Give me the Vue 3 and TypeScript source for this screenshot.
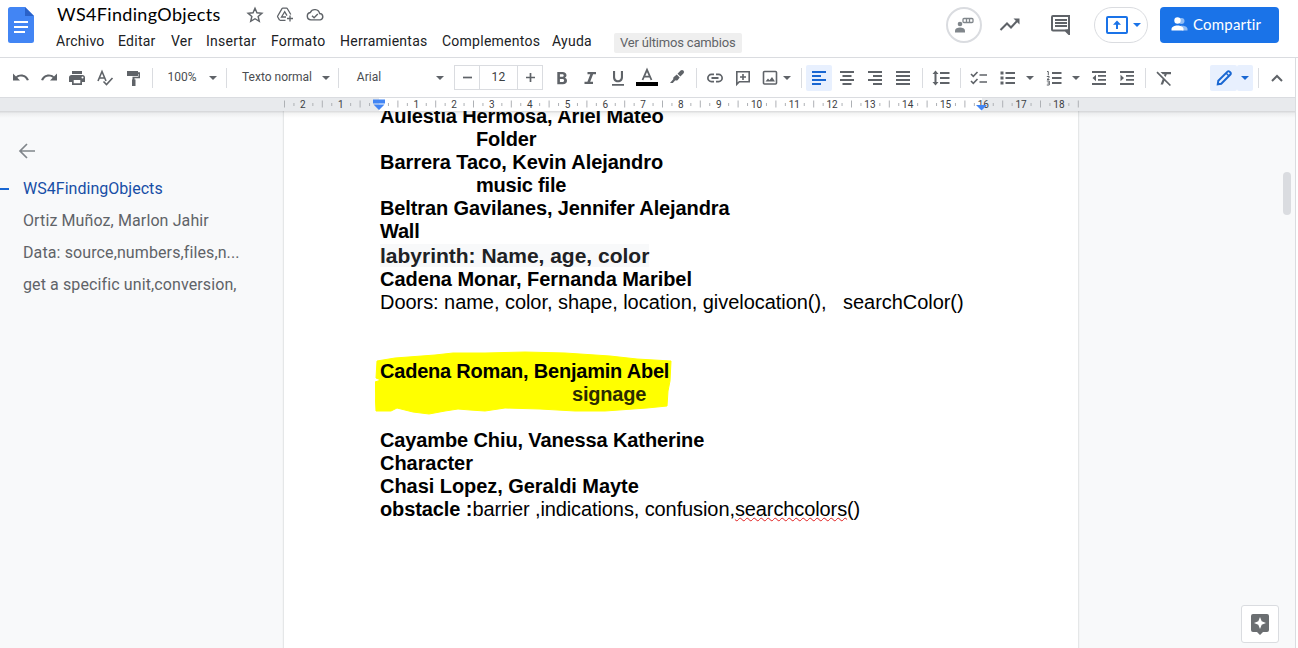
<script setup lang="ts">
interface Tool {
  kind: 'icon' | 'caret' | 'sep' | 'gap' | 'label' | 'size'
  w: number
  icon?: string
  text?: string
  tone?: string
}

const icon = (name: string, w = 28, tone = ''): Tool => ({ kind: 'icon', w, icon: name, tone })
const caret = (w: number, tone = ''): Tool => ({ kind: 'caret', w, tone })
const sep = (w: number): Tool => ({ kind: 'sep', w })
const gap = (w: number): Tool => ({ kind: 'gap', w })
const label = (text: string, w: number): Tool => ({ kind: 'label', w, text })

const tools: Tool[] = [
  icon('undo'), icon('redo'), icon('print'), icon('spell'), icon('paint'), sep(11),
  label('100%', 48), caret(14), sep(12),
  label('Texto normal', 90), caret(8), sep(17),
  label('Arial', 44), gap(42), caret(14), gap(7),
  { kind: 'size', w: 89 }, gap(5),
  icon('bold'), icon('italic', 28), icon('underline'), icon('color', 30), icon('marker', 30), sep(9),
  icon('link'), icon('addComment'), icon('image', 26), caret(8), gap(5), sep(10),
  icon('alignLeft', 26, 'active'), gap(1), icon('alignCenter'), icon('alignRight'), icon('justify'), sep(10),
  icon('spacing', 28), sep(10),
  icon('checklist'), icon('bullets', 30), caret(14), icon('numbers', 34), caret(10), gap(4),
  icon('outdent'), icon('indent'), sep(8),
  icon('clear', 30), gap(31),
  icon('pencil', 27, 'active'), caret(16, 'active'), sep(11),
  icon('chevron', 26),
]

// Glyphs on an 18 x 18 grid
const fills: Record<string, string> = {
  undo: 'M1 4.500v7h7L5.300 8.800c1-.8 2.300-1.300 3.800-1.300 2.700 0 4.900 1.600 5.800 4.100l2-.7C15.700 7.600 12.700 5.500 9.100 5.500c-2 0-3.700.7-5.100 1.900z',
  redo: 'M17 4.500v7h-7l2.700-2.700c-1-.8-2.300-1.300-3.800-1.300-2.700 0-4.900 1.600-5.800 4.100l-2-.7C2.300 7.600 5.300 5.500 8.900 5.500c2 0 3.700.7 5.100 1.900z',
  print: 'M4 2h10v3H4zM14.500 6h-11C2 6 1 7 1 8.500V13h3v3h10v-3h3V8.500C17 7 16 6 14.500 6zM12.300 14.300H5.700V11h6.600zM14.500 9.500a1 1 0 1 1 0-2 1 1 0 0 1 0 2z',
  paint: 'M3 2h11v1.200h2V9.200h-5.500v1.300h1V17H8v-6.500h.5V7.700h6V5H14v2H3z',
  bold: 'M4.300 3h5.200c2.500 0 4 1.300 4 3.300 0 1.200-.7 2.100-1.600 2.500 1.300.4 2.100 1.500 2.100 2.900 0 2.200-1.600 3.600-4.200 3.600H4.300zM6.900 5.200v2.600h2.300c.9 0 1.500-.5 1.500-1.300s-.6-1.300-1.500-1.300zM6.900 10v3h2.600c1 0 1.600-.6 1.600-1.500S10.500 10 9.500 10z',
  italic: 'M6.500 3H15v2.200h-2.900L9.200 12.800H12V15H3.500v-2.200h2.900l2.900-7.600H6.500z',
  underline: 'M4 2h2.100v6c0 2 1.100 3.200 2.900 3.200s2.900-1.200 2.900-3.200V2H14v6.200c0 3-2 5-5 5s-5-2-5-5zM3 15h12v1.700H3z',
  marker: 'M12.600 1.600a2 2 0 0 1 2.800 0 2 2 0 0 1 0 2.900l-3 3.100-2.900-2.900zM8.800 5.500l2.900 2.900-1.900 2.500c-.7.800-1.700.9-2.500.4L4.800 14H2l3.400-3.900c-.4-.8-.2-1.600.4-2.200z',
  link: 'M2.700 9c0-1.500 1.200-2.700 2.700-2.700H8V4.600H5.400a4.400 4.400 0 0 0 0 8.800H8v-1.700H5.400C3.900 11.700 2.700 10.500 2.700 9zM5.500 8.100h7v1.800h-7zM12.600 4.600H10v1.700h2.600a2.700 2.700 0 0 1 0 5.400H10v1.700h2.600a4.400 4.400 0 0 0 0-8.800z',
  alignLeft: 'M2 2h14v2H2zM2 6h9v2H2zM2 10h14v2H2zM2 14h9v2H2z',
  alignCenter: 'M2 2h14v2H2zM4.500 6h9v2h-9zM2 10h14v2H2zM4.500 14h9v2h-9z',
  alignRight: 'M2 2h14v2H2zM7 6h9v2H7zM2 10h14v2H2zM7 14h9v2H7z',
  justify: 'M2 2h14v2H2zM2 6h14v2H2zM2 10h14v2H2zM2 14h14v2H2z',
  spacing: 'M8 3h9.500v2H8zM8 8h9.500v2H8zM8 13h9.500v2H8zM3.500 1.500 6.500 5h-2v8h2l-3 3.500-3-3.500h2V5h-2z',
  bullets: 'M1.500 2.500h3v3h-3zM1.500 7.500h3v3h-3zM1.500 12.500h3v3h-3zM6.500 3H16v2H6.500zM6.500 8H16v2H6.500zM6.500 13H16v2H6.500z',
  outdent: 'M2 2h14v2H2zM8 6h8v1.800H8zM8 10h8v1.800H8zM2 14h14v2H2zM6 5.800v6.400L2.500 9z',
  indent: 'M2 2h14v2H2zM8 6h8v1.800H8zM8 10h8v1.800H8zM2 14h14v2H2zM2.500 5.800v6.400L6 9z',
  clear: 'M5.500 3H16v2.200h-4.200L10.600 8 9 6.400l.5-1.200H7.800zM2.600 2.500 16 15.900l-1.200 1.200-5.400-5.400L8 15.500H5.600l2.100-5.400L1.400 3.700z',
}

const menus = [
  { text: 'Archivo', w: 62 }, { text: 'Editar', w: 53 }, { text: 'Ver', w: 35 },
  { text: 'Insertar', w: 65 }, { text: 'Formato', w: 69 }, { text: 'Herramientas', w: 102 },
  { text: 'Complementos', w: 110 }, { text: 'Ayuda', w: 62 },
]

const outline = ['Ortiz Muñoz, Marlon Jahir', 'Data: source,numbers,files,n...', 'get a specific unit,conversion,']

// Horizontal ruler, one cell per centimetre
const CM = 37.8
const ORIGIN = 379
const cells = Array.from({ length: 21 }, (_, i) => i - 2)
const at = (n: number) => ORIGIN + n * CM
</script>

<template>
  <div class="app">
    <header class="header">
      <svg class="logo" width="26" height="36" viewBox="0 0 26 36">
        <path d="M2.500 0H17l9 9v24.500a2.500 2.500 0 0 1-2.500 2.500h-21A2.500 2.500 0 0 1 0 33.500v-31A2.500 2.500 0 0 1 2.500 0z" fill="#4285f4" />
        <path d="M17 0l9 9h-9z" fill="#2a62c9" />
        <path d="M6 14h14v2H6zM6 19h14v2H6zM6 24h11v2H6z" fill="#fff" />
      </svg>
      <div class="heading">
        <div class="title-row">
          <span class="title">WS4FindingObjects</span>
          <svg class="t-icon" width="18" height="18" viewBox="0 0 24 24">
            <path d="M12 3l2.600 6.100 6.600.6-5 4.300 1.500 6.500-5.700-3.500-5.700 3.500L7.800 14l-5-4.300 6.600-.6z" fill="none" stroke="#5f6368" stroke-width="1.900" />
          </svg>
          <svg class="t-icon" width="18" height="18" viewBox="0 0 18 18">
            <g fill="none" stroke="#5f6368" stroke-width="1.300">
              <path d="M9.500 14.300H4.300a1 1 0 0 1-.9-.5L1.700 11a1 1 0 0 1 0-1L6 2.700a1 1 0 0 1 .9-.5h3.600a1 1 0 0 1 .9.500L14.800 8.500" />
              <path d="M10 11H5.500L8.700 5.700 11 9.600" />
              <path d="M11 12.500h6M14 9.500v6" />
            </g>
          </svg>
          <svg class="t-icon" width="18" height="18" viewBox="0 0 24 24">
            <path d="M19 18.500H6.500a5 5 0 0 1-.7-9.900A6.600 6.600 0 0 1 18.200 10 4.300 4.300 0 0 1 19 18.500z" fill="none" stroke="#5f6368" stroke-width="1.900" />
            <path d="M8 13l2.800 2.700 4.900-4.900" fill="none" stroke="#5f6368" stroke-width="1.800" />
          </svg>
        </div>
        <nav class="menus">
          <span v-for="m in menus" :key="m.text" :style="{ width: m.w + 'px' }">{{ m.text }}</span>
          <span class="changes">Ver últimos cambios</span>
        </nav>
      </div>
      <div class="actions">
        <span class="round">
          <svg width="20" height="16" viewBox="0 0 20 16">
            <circle cx="6" cy="7" r="2.300" fill="#80868b" />
            <path d="M1 15.500v-2c0-2 2.500-3 5-3s5 1 5 3v2z" fill="#80868b" />
            <path d="M10 1.500h8a1 1 0 0 1 1 1v2a1 1 0 0 1-1 1h-8a1 1 0 0 1-1-1v-2a1 1 0 0 1 1-1zM12.500 1.500v4M15.500 1.500v4" fill="none" stroke="#80868b" stroke-width="1.300" />
          </svg>
        </span>
        <svg class="trend" width="22" height="16" viewBox="0 0 22 16">
          <path d="M1.500 13 8 6.500l4 4 7-7.500" fill="none" stroke="#5f6368" stroke-width="2" />
          <path d="M14.500 1.500H20.500V7.500z" fill="#5f6368" />
        </svg>
        <svg class="comments" width="20" height="20" viewBox="0 0 20 20">
          <path d="M2 1h16v18l-3.500-3.500H2a1 1 0 0 1-1-1V2a1 1 0 0 1 1-1z" fill="none" stroke="#5f6368" stroke-width="2" />
          <path d="M18.500 14.500V19L14.500 15z" fill="#5f6368" stroke="#5f6368" />
          <path d="M4 5h12M4 8h12M4 11h12" stroke="#5f6368" stroke-width="2" />
        </svg>
        <span class="present">
          <svg width="22" height="18" viewBox="0 0 22 18">
            <rect x="1" y="1" width="20" height="16" rx="1" fill="none" stroke="#1a73e8" stroke-width="2" />
            <path d="M11 4.500l4 4.200h-3V13h-2V8.700H7z" fill="#1a73e8" />
          </svg>
          <svg width="8" height="4" viewBox="0 0 8 4"><path d="M0 0h8L4 4z" fill="#1a73e8" /></svg>
        </span>
        <button class="share">
          <svg width="17" height="14" viewBox="0 0 17 14">
            <g fill="#8fbcf5"><circle cx="10.500" cy="4" r="3" /><path d="M10 8.500c4 .2 6.500 1.600 6.500 3.500v1.500H11z" /></g>
            <g fill="#fff"><circle cx="6.500" cy="3.500" r="3.200" /><path d="M.5 13.500V12c0-2.400 3-3.600 6-3.600s6 1.200 6 3.600v1.500z" /></g>
          </svg>
          <span>Compartir</span>
        </button>
      </div>
    </header>

    <div class="frame">
      <div class="toolbar">
        <div v-for="(t, i) in tools" :key="i" class="tool" :class="[t.kind, t.tone]" :style="{ width: t.w + 'px' }">
          <span v-if="t.kind === 'label'">{{ t.text }}</span>
          <i v-else-if="t.kind === 'sep'" />
          <svg v-else-if="t.kind === 'caret'" width="8" height="4" viewBox="0 0 8 4"><path d="M0 0h8L4 4z" fill="currentColor" /></svg>
          <template v-else-if="t.kind === 'size'">
            <span class="step"><svg width="9" height="9"><path d="M0 4.500h9" stroke="currentColor" stroke-width="1.700" /></svg></span>
            <span class="num">12</span>
            <span class="step"><svg width="9" height="9"><path d="M0 4.500h9M4.500 0v9" stroke="currentColor" stroke-width="1.700" /></svg></span>
          </template>
          <svg v-else-if="t.kind === 'icon'" width="18" height="18" viewBox="0 0 18 18" overflow="visible">
            <path v-if="fills[t.icon!]" :d="fills[t.icon!]" fill="currentColor" fill-rule="evenodd" />
            <g v-else fill="none" stroke="currentColor" stroke-width="1.600">
              <template v-if="t.icon === 'spell'">
                <path d="M2 12 6 2.500 10 12M3.300 9h5.400" /><path d="M7.500 12.500 10.500 15.500 16.500 9" />
              </template>
              <template v-else-if="t.icon === 'color'">
                <path d="M4.500 11 9 .8 13.500 11M6 7.600h6" stroke-width="1.800" />
                <path d="M-2 15h22" stroke="#000" stroke-width="4" />
              </template>
              <template v-else-if="t.icon === 'addComment'">
                <path d="M2.800 2.800h12.400v10H5.300l-2.500 2.500z" /><path d="M9 5v6M6 8h6" />
              </template>
              <template v-else-if="t.icon === 'image'">
                <rect x="2.500" y="2.500" width="13" height="12.500" rx="1" />
                <path d="M4.500 12.500 7 9.500l1.500 1.700L11 8l3 4.500z" fill="currentColor" stroke="none" />
              </template>
              <template v-else-if="t.icon === 'checklist'">
                <path d="M1 5l2.300 2.300L7.500 3M1 12l2.300 2.300L7.500 10" /><path d="M9.500 6H17M9.500 13H17" />
              </template>
              <template v-else-if="t.icon === 'numbers'">
                <path d="M7 4h9.500M7 9h9.500M7 14h9.500" stroke-width="2" />
                <path d="M2 2.500h1.300v3.800M1.800 7.500h2.400v1L2 10.500h2.500M1.800 12h2.500v4H1.800M2.500 14h1.800" stroke-width="1" />
              </template>
              <template v-else-if="t.icon === 'pencil'">
                <path d="M2.800 15.200 3.300 11.800 12.500 2.600a1.400 1.400 0 0 1 2 0l.9.900a1.400 1.400 0 0 1 0 2L6.200 14.700z" stroke-width="2" />
                <path d="M11 4l3 3" stroke-width="1.500" />
              </template>
              <path v-else-if="t.icon === 'chevron'" d="M4 12l5-5 5 5" stroke-width="2" />
            </g>
          </svg>
        </div>
      </div>

      <svg class="ruler" width="1295" height="14" viewBox="0 0 1295 14">
        <rect width="1295" height="14" fill="#e8eaed" />
        <rect :x="ORIGIN" y="0" width="603" height="14" fill="#fff" />
        <path d="M0 .5h1295" stroke="#dadce0" />
        <g v-for="n in cells" :key="n">
          <path :d="`M${at(n - 0.5)} 3.500v7M${at(n - 0.25)} 6v3M${at(n + 0.25)} 6v3`" stroke="#aeb1b5" />
          <text v-if="n !== 0" :x="at(n) - 0.5" y="11" text-anchor="middle">{{ Math.abs(n) }}</text>
        </g>
        <path :d="`M${at(18.5)} 3.500v7`" stroke="#aeb1b5" />
        <path d="M373 2.500h12v4h-12zM373.500 7.500h11L379 13z" fill="#4285f4" />
        <path d="M976 8h11L981.500 13.500z" fill="#4285f4" />
      </svg>

      <div class="body">
        <aside class="outline">
          <svg class="back" width="18" height="18" viewBox="0 0 18 18"><path d="M17 9H2.500M9 2 2 9l7 7" fill="none" stroke="#80868b" stroke-width="1.700" /></svg>
          <div class="entry current">WS4FindingObjects</div>
          <div v-for="o in outline" :key="o" class="entry">{{ o }}</div>
        </aside>

        <main class="page">
          <p class="snug">Aulestia Hermosa, Ariel Mateo</p>
          <p class="tab snug">Folder</p>
          <p>Barrera Taco, Kevin Alejandro</p>
          <p class="tab tight">music file</p>
          <p class="snug">Beltran Gavilanes, Jennifer Alejandra</p>
          <p class="tight">Wall</p>
          <p class="maze"><span>labyrinth: Name, age, color</span></p>
          <p>Cadena Monar, Fernanda Maribel</p>
          <p class="plain">Doors: name, color, shape, location, givelocation(), &nbsp; searchColor()</p>
          <p class="blank" />
          <p class="blank" />
          <div class="marked">
            <svg class="blob" width="300" height="64" viewBox="0 0 300 64">
              <path d="M2 10 L20 7 L60 4 L78 2 L110 2 L150 1 L190 2 L235 5 L262 8 L296 10 L295 30 L293 40 L292 55 L272 57 L230 60 L200 60 L165 58 L130 57 L110 60 L95 59 L83 58 L70 60 L54 63 L38 61 L22 57 L16 60 L1 60 L0 40 L0 31 L6 29 L1 27z" fill="#ff0" stroke="#ff0" stroke-linejoin="round" />
            </svg>
            <p class="tight">Cadena Roman, Benjamin Abel</p>
            <p class="tab2 tight">signage</p>
          </div>
          <p class="blank" />
          <p class="snug">Cayambe Chiu, Vanessa Katherine</p>
          <p>Character</p>
          <p>Chasi Lopez, Geraldi Mayte</p>
          <p class="plain obstacle"><b>obstacle :</b>barrier ,indications, confusion,<span class="typo">searchcolors</span>()</p>
        </main>

        <div class="thumb" />
        <div class="explore">
          <svg width="18" height="21" viewBox="0 0 18 21">
            <path d="M2 0h14a2 2 0 0 1 2 2v14a2 2 0 0 1-2 2h-4l-3 3-3-3H2a2 2 0 0 1-2-2V2a2 2 0 0 1 2-2z" fill="#6b6e71" />
            <path d="M9 3l1.700 4.300L15 9l-4.300 1.700L9 15l-1.700-4.300L3 9l4.300-1.700z" fill="#fff" />
          </svg>
        </div>
      </div>
    </div>
  </div>
</template>

<style>
body { margin: 0; overflow: hidden; }
</style>

<style scoped>
.app { width: 1298px; height: 648px; overflow: hidden; background: #fff; font-family: Roboto, sans-serif; color: #202124; }
.app svg { display: block; flex: none; }
.header { display: flex; height: 57px; border-bottom: 1px solid #dadce0; box-sizing: content-box; }
.logo { margin: 7px 0 0 8px; }
.heading { margin-left: 22px; width: 700px; }
.title-row { display: flex; align-items: center; height: 29px; }
.title { box-sizing: border-box; width: 190px; padding-left: 1px; font: 18px/28px Lato, sans-serif; letter-spacing: .34px; color: #000; white-space: nowrap; margin-top: -2px; }
.t-icon { margin-right: 12px; }
.menus { display: flex; height: 24px; line-height: 24px; font-size: 14px; letter-spacing: .25px; white-space: nowrap; }
.menus .changes { height: 20px; margin-top: 4px; line-height: 20px; padding: 0 7px 0 6px; background: #efefef; border-radius: 2px; color: #5f6368; font-size: 13px; letter-spacing: -.18px; }
.actions { display: flex; margin-left: 190px; }
.round { display: flex; align-items: center; justify-content: center; width: 32px; height: 32px; margin-top: 7px; border: 2px solid #dadce0; border-radius: 50%; }
.trend { margin: 17px 0 0 17px; }
.comments { margin: 15px 0 0 30px; }
.present { display: flex; align-items: center; gap: 5px; box-sizing: border-box; width: 54px; height: 36px; padding-left: 11px; margin: 7px 0 0 23px; border: 1px solid #dadce0; border-radius: 18px; }
.share { display: flex; align-items: center; gap: 5px; width: 119px; height: 36px; margin: 7px 0 0 12px; padding: 0 0 2px 11px; border: 0; border-radius: 4px; background: #1a73e8; color: #fff; font: 15px Lato, sans-serif; letter-spacing: .2px; }
.frame { width: 1295px; border-right: 1px solid #dadce0; }
.toolbar { display: flex; box-sizing: border-box; height: 39px; padding-left: 7px; color: #5f6368; align-items: center; }
.tool { display: flex; flex: none; align-items: center; justify-content: center; height: 26px; }
.sep i { width: 1px; height: 20px; background: #dadce0; }
.label { font-size: 12px; white-space: nowrap; color: #4a4d51; padding-bottom: 1px; }
.size { box-sizing: border-box; height: 25px; border: 1px solid #dadce0; }
.step { display: flex; width: 24px; height: 23px; align-items: center; justify-content: center; }
.num { flex: 1; line-height: 22px; height: 23px; text-align: center; border: solid #dadce0; border-width: 0 1px; font-size: 12px; letter-spacing: .3px; color: #3c4043; }
.active { background: #e8f0fe; color: #1967d2; border-radius: 2px; }
.ruler text { font: 10px Roboto, sans-serif; fill: #3c4043; }
.body { position: relative; display: flex; height: 537px; background: #f8f9fa; overflow: hidden; }
.body::before { content: ''; position: absolute; z-index: 2; inset: 0 0 auto; height: 7px; background: linear-gradient(rgba(60, 64, 67, .2), rgba(60, 64, 67, .06) 35%, transparent); }
.outline { width: 284px; }
.back { margin: 31px 0 13px 18px; }
.entry { height: 32px; padding-left: 23px; line-height: 32px; font-size: 16px; letter-spacing: .11px; color: #5f6368; white-space: nowrap; }
.current { color: #174ea6; letter-spacing: .03px; }
.current::before { content: ''; float: left; width: 9px; height: 2px; margin: 15px 0 0 -23px; background: #1967d2; }
.page { box-sizing: border-box; width: 794px; height: 560px; margin-top: -6px; padding-left: 96px; background: #fff; box-shadow: 0 0 2px rgba(60, 64, 67, .3); font: bold 20px/23px "Liberation Sans", Arial, sans-serif; letter-spacing: -.05px; color: #000; white-space: nowrap; }
.page p { position: relative; height: 23px; margin: 0; }
.page .snug { letter-spacing: -.12px; }
.page .tight { letter-spacing: -.21px; }
.page .tab { padding-left: 96px; }
.page .tab2 { padding-left: 192px; color: #2b2b00; }
.page .maze { height: 25px; font-size: 21px; line-height: 25px; letter-spacing: -.01px; color: #202124; }
.maze span { background: #f8f9fa; }
.page .plain { font-weight: normal; }
.page .obstacle { letter-spacing: -.1px; }
.marked { position: relative; }
.blob { position: absolute; left: -5px; top: -9px; }
.typo { text-decoration: underline wavy #e02020 1.3px; text-underline-offset: 1px; text-decoration-skip-ink: none; }
.thumb { width: 8px; height: 43px; margin: 61px 0 0 205px; border-radius: 4px; background: #dadce0; }
.explore { position: absolute; left: 1241px; top: 494px; display: flex; align-items: center; justify-content: center; box-sizing: border-box; width: 38px; height: 38px; border: 1px solid #dadce0; border-radius: 3px; background: #fff; }
</style>
